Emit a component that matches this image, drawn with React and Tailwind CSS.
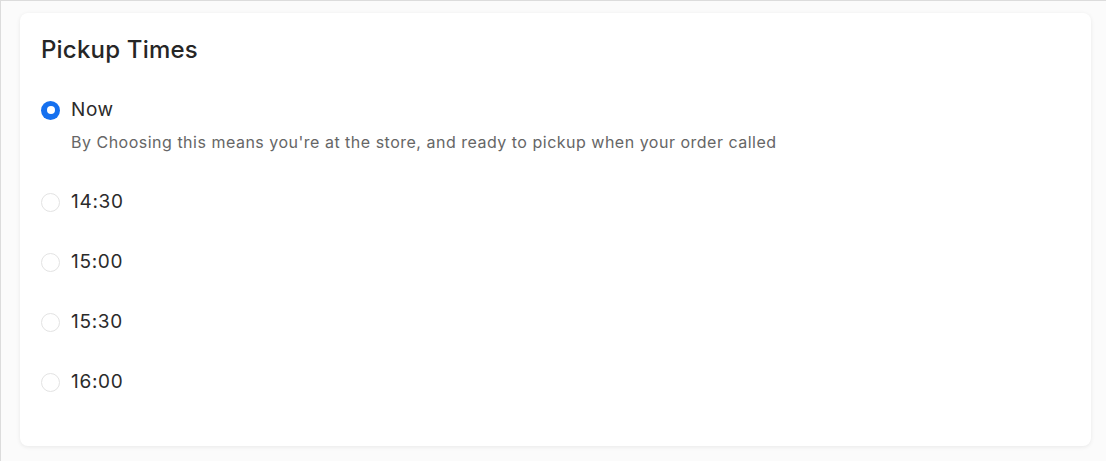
const times = ['14:30', '15:00', '15:30', '16:00'];

const Radio = ({ checked }) =>
    checked ? (
        <span className="flex size-[19px] shrink-0 items-center justify-center rounded-full bg-[#1570ef]">
            <span className="size-[8px] rounded-full bg-white" />
        </span>
    ) : (
        <span className="size-[19px] shrink-0 rounded-full border border-[#e3e3e3] bg-white" />
    );

export default function App() {
    return (
        <div className="min-h-[461px] border-t border-l border-[#dcdcdc] bg-[#fbfbfb] pt-[12px] pr-[15px] pb-[14px] pl-[19px] font-['Inter',sans-serif]">
            <section className="h-[433px] rounded-[8px] bg-white px-[21px] pt-[22px] shadow-[0_1px_4px_rgba(0,0,0,0.08)]">
                <h2 className="text-[24px] leading-[30px] font-medium tracking-[0.2px] text-[#262626]">Pickup Times</h2>

                <div className="mt-[33px]">
                    <label className="flex items-center gap-[11px]">
                        <Radio checked />
                        <span className="text-[19px] leading-[24px] tracking-[0.6px] text-[#2b2b2b]">Now</span>
                    </label>
                    <p className="mt-[10px] pl-[30px] text-[16px] leading-[20px] tracking-[0.5px] text-[#666]">
                        By Choosing this means you&apos;re at the store, and ready to pickup when your order called
                    </p>
                </div>

                <div className="mt-[38px] flex flex-col gap-[36px]">
                    {times.map((t) => (
                        <label key={t} className="flex items-center gap-[11px]">
                            <Radio />
                            <span className="text-[19px] leading-[24px] tracking-[0.7px] text-[#2b2b2b]">{t}</span>
                        </label>
                    ))}
                </div>
            </section>
        </div>
    );
}
